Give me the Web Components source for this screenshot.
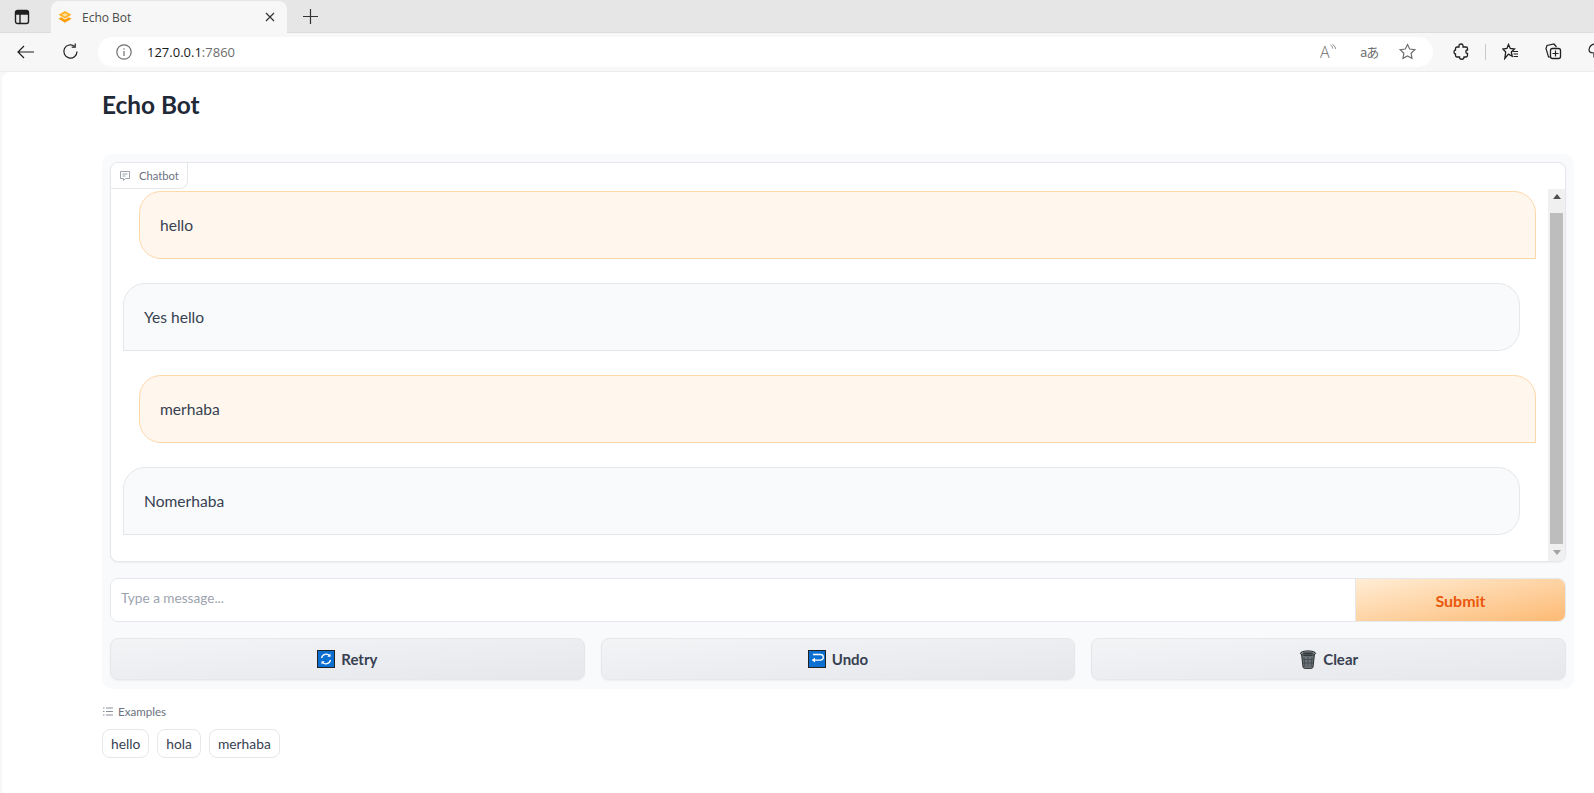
<!DOCTYPE html>
<html>
<head>
<meta charset="utf-8">
<title>Echo Bot</title>
<style>
    html, body { margin: 0; height: 793px; overflow: hidden; background: #f7f7f7; }
    body { font-family: Lato, "Noto Sans", sans-serif; }
</style>
</head>
<body>
<browser-chrome url-host="127.0.0.1" url-port=":7860" tab-title="Echo Bot"></browser-chrome>
<app-page>
    <h-title>Echo Bot</h-title>
    <chat-panel>
        <chat-box>
            <chat-message from="user">hello</chat-message>
            <chat-message from="bot">Yes hello</chat-message>
            <chat-message from="user">merhaba</chat-message>
            <chat-message from="bot">Nomerhaba</chat-message>
        </chat-box>
        <chat-input placeholder="Type a message..."></chat-input>
        <action-row>
            <action-button icon="retry">Retry</action-button>
            <action-button icon="undo">Undo</action-button>
            <action-button icon="clear">Clear</action-button>
        </action-row>
    </chat-panel>
    <example-list items="hello,hola,merhaba"></example-list>
</app-page>

<script>
const FONT = 'Lato, "Noto Sans", sans-serif';

const chromeTemplate = document.createElement('template');
chromeTemplate.innerHTML = `
<style>
    :host { display: block; font-family: "Open Sans", "Noto Sans", sans-serif; color: #1b1b1b; }
    svg { display: block; fill: none; stroke: #1f1f1f; stroke-width: 1.2; }
    .strip { display: flex; align-items: flex-end; height: 32px; background: #e6e6e6; border-bottom: 1px solid #dcdcdc; }
    .side { width: 16px; height: 16px; margin: 0 14px 7px 14px; flex: none; }
    .tab { display: flex; align-items: center; box-sizing: border-box; width: 236px; height: 32px; margin: 0 0 -1px 7px; padding: 0 8px 0 6px; background: #f7f7f7; border-radius: 8px 8px 0 0; font-size: 12px; color: #4a4a4a; }
    .tab .fav { margin: 0 10px 0 1px; stroke: none; }
    .tab span { flex: 1; }
    .plus { margin: 0 0 8px 16px; }
    .bar { display: flex; align-items: center; box-sizing: border-box; height: 39px; padding-bottom: 1px; background: #f7f7f7; border-bottom: 1px solid #ececec; }
    .bar > svg { flex: none; }
    .back { margin-left: 17px; }
    .reload { margin-left: 28px; }
    .pill { flex: none; display: flex; align-items: center; box-sizing: border-box; width: 1335px; height: 30px; margin: 0 0 0 19px; padding-left: 18px; background: #fff; border-radius: 15px; font-size: 13px; }
    .pill .port { color: #6d6d6d; }
    .pill .info { margin-right: 15px; stroke: #6f6f6f; }
    .tools { flex: none; display: flex; align-items: center; width: 113px; margin-left: -113px; color: #6f6f6f; }
    .tools svg { stroke: #6f6f6f; }
    .read { display: flex; align-items: flex-start; width: 18px; font-size: 16px; line-height: 18px; font-weight: 300; }
    .trans { margin-left: 22px; width: 18px; white-space: nowrap; font: 13px "Noto Sans CJK JP", "Noto Sans", sans-serif; letter-spacing: -1px; }
    .sep { flex: none; width: 1px; height: 16px; background: #c9c9c9; margin: 0 16px 0 16px; }
</style>
<div class="strip">
    <svg class="side" width="16" height="16" viewBox="0 0 16 16"><rect x="1.5" y="1.5" width="13" height="13" rx="2" stroke-width="1.4"/><path d="M1.5 5h13M6 5v9.5" stroke-width="1.4"/><rect x="2" y="2" width="12" height="3" fill="#1f1f1f" stroke="none"/></svg>
    <div class="tab">
        <svg class="fav" width="14" height="14" viewBox="0 0 14 14"><path d="M7 1 13.500 4.800 7 8.600.5 4.800z" fill="#ffb224"/><path d="M.5 8.800 3.200 7.200 7 9.400l3.800-2.200 2.700 1.600L7 12.800z" fill="#ff9d0a"/><path d="M4 4.800 7 3.200l3 1.600-3 1.700z" fill="#ffe3a6"/></svg>
        <span id="title"></span>
        <svg width="10" height="10" viewBox="0 0 10 10" style="margin-right:4px"><path d="M1 1l8 8M9 1 1 9" stroke="#333"/></svg>
    </div>
    <svg class="plus" width="15" height="15" viewBox="0 0 15 15"><path d="M7.5 0v15M0 7.5h15" stroke="#333"/></svg>
</div>
<div class="bar">
    <svg class="back" width="17" height="14" viewBox="0 0 17 14"><path d="M17 7H1M7 1 1 7l6 6"/></svg>
    <svg class="reload" width="17" height="17" viewBox="0 0 17 17"><path d="M15 8.5A6.6 6.6 0 1 1 12.6 3.4"/><path d="M13.2 .6v3.5H9.7"/></svg>
    <div class="pill">
        <svg class="info" width="16" height="16" viewBox="0 0 16 16"><circle cx="8" cy="8" r="7.2"/><path d="M8 7v5M8 4.2v1.4"/></svg>
        <span id="host"></span><span class="port" id="port"></span>
    </div>
    <div class="tools">
        <div class="read"><span>A</span><svg width="7" height="8" viewBox="0 0 7 8" style="margin-top:1px"><path d="M.5 1c1.500 1 2 2 2.200 3.500M2.500.3c1.800 1.100 2.800 2.800 3 4.500" stroke-width=".9"/></svg></div>
        <div class="trans">aあ</div>
        <svg style="margin-left:21px" width="17" height="17" viewBox="0 0 17 17"><path d="M8.500 1.500 10.700 6 15.800 6.700 12.100 10.200 13 15.300 8.500 12.900 4 15.300 4.900 10.200 1.200 6.700 6.300 6z"/></svg>
    </div>
    <svg style="margin-left:20px" width="16" height="17" viewBox="0 0 16 17"><path d="M6 2.500c0-2 4-2 4 0V4h3a1.500 1.500 0 0 1 1.500 1.500V7c-2.300 0-2.300 3.500 0 3.500v2A1.500 1.500 0 0 1 13 14h-2c0 3-4.500 3-4.500 0H4a1.500 1.500 0 0 1-1.500-1.500V11C.5 11 .5 7 2.500 7V5.500A1.500 1.500 0 0 1 4 4h2z" stroke-width="1.300"/></svg>
    <div class="sep"></div>
    <svg width="17" height="17" viewBox="0 0 17 17"><path d="M6.500 1.500 8.300 5.500 12.500 6 9.300 9 10.200 13.300 6.500 11.200 2.800 15.500 3.700 9 .8 6 4.900 5.500z" stroke-width="1.300"/><path d="M11 8.500h5M11.500 11h4.500M11.500 13.500h4.500"/></svg>
    <svg style="margin-left:26px" width="17" height="17" viewBox="0 0 17 17"><path d="M6 14H3.500L1 5.500 2 2.500 9 1l2.500 3" stroke-width="1.200"/><rect x="5.500" y="5.500" width="10" height="10" rx="2" stroke-width="1.300"/><path d="M10.500 7.500v6M7.500 10.500h6"/></svg>
    <svg style="margin-left:26px" width="16" height="17" viewBox="0 0 16 17"><path d="M1 7a6 6 0 0 1 12 0c0 3-3 3-5 3l-2 3v-3C3 10 1 9 1 7z"/></svg>
</div>`;

class BrowserChrome extends HTMLElement {
    constructor() {
        super();
        this.root = this.attachShadow({mode: 'open'});
        this.root.appendChild(chromeTemplate.content.cloneNode(true));
    }

    connectedCallback() {
        this.root.getElementById('title').textContent = this.getAttribute('tab-title');
        this.root.getElementById('host').textContent = this.getAttribute('url-host');
        this.root.getElementById('port').textContent = this.getAttribute('url-port');
    }
}

// small helper for elements that are just a styled slot
function slotted(name, css, inner) {
    customElements.define(name, class extends HTMLElement {
        constructor() {
            super();
            this.attachShadow({mode: 'open'}).innerHTML = `<style>${css}</style>${inner || '<slot></slot>'}`;
        }
    });
}

slotted('app-page', `
    :host { display: block; box-sizing: border-box; height: 721px; margin-left: 2px; padding: 0 20px 0 100px; background: #fff; border-radius: 8px 0 0 0; font-family: ${FONT}; }
`);

slotted('h-title', `
    :host { display: block; padding: 15px 0 31px 0; font-size: 24.4px; line-height: 36px; font-weight: 700; color: #1f2937; }
`);

slotted('chat-panel', `
    :host { display: flex; flex-direction: column; gap: 16px; box-sizing: border-box; height: 535px; padding: 8px 8px 0 8px; background: #f9fafb; border-radius: 10px; }
`);

slotted('action-row', `
    :host { display: grid; grid-template-columns: repeat(3, 1fr); gap: 16px; }
`);

const boxTemplate = document.createElement('template');
boxTemplate.innerHTML = `
<style>
    :host { display: block; position: relative; box-sizing: border-box; height: 400px; background: #fff; border: 1px solid #e5e7eb; border-radius: 8px; box-shadow: 0 1px 2px rgba(0,0,0,.05); overflow: hidden; }
    .label { position: absolute; left: 0; top: 0; display: flex; align-items: center; gap: 8px; box-sizing: border-box; height: 26px; padding: 0 8px; background: #fff; border: 1px solid #e5e7eb; border-width: 0 1px 1px 0; border-radius: 0 0 8px 0; font-size: 11.2px; color: #6b7280; z-index: 1; }
    .wrap { display: flex; height: 100%; }
    .list { flex: 1; display: flex; flex-direction: column; gap: 24px; padding-top: 28px; min-width: 0; }
    .scroll { flex: none; display: flex; flex-direction: column; align-items: center; box-sizing: border-box; width: 17px; height: 373px; margin-top: 26px; background: #f0f0f0; }
    .arrow { flex: none; height: 24px; padding-top: 5px; box-sizing: border-box; }
    .arrow.down { height: 18px; padding-top: 6px; }
    .thumb { flex: 1; width: 13px; background: #bdbdbd; }
</style>
<div class="label">
    <svg width="12" height="12" viewBox="0 0 12 12" fill="none" stroke="#9ca3af"><path d="M1.500 1.500h9v7H6.500l-2 2v-2h-3z"/><path d="M3.500 4h5M3.500 6h3"/></svg>
    <span>Chatbot</span>
</div>
<div class="wrap">
    <div class="list"><slot></slot></div>
    <div class="scroll">
        <div class="arrow"><svg width="8" height="5" viewBox="0 0 8 5" style="display:block"><path d="M4 0 8 5H0z" fill="#505050"/></svg></div>
        <div class="thumb"></div>
        <div class="arrow down"><svg width="8" height="5" viewBox="0 0 8 5" style="display:block"><path d="M0 0h8L4 5z" fill="#a3a3a3"/></svg></div>
    </div>
</div>`;

class ChatBox extends HTMLElement {
    constructor() {
        super();
        this.root = this.attachShadow({mode: 'open'});
        this.root.appendChild(boxTemplate.content.cloneNode(true));
    }
}

slotted('chat-message', `
    :host { display: block; box-sizing: border-box; height: 68px; padding: 21px 20px; border: 1px solid; font-size: 15.6px; line-height: 24px; color: #374151; }
    :host([from="user"]) { margin: 0 12px 0 28px; background: #fff7ed; border-color: #fed7aa; border-radius: 22px 22px 0 22px; }
    :host([from="bot"]) { margin: 0 28px 0 12px; background: #f9fafb; border-color: #e5e7eb; border-radius: 22px 22px 22px 0; }
`);

const inputTemplate = document.createElement('template');
inputTemplate.innerHTML = `
<style>
    :host { display: flex; box-sizing: border-box; height: 44px; background: #fff; border: 1px solid #e5e7eb; border-radius: 8px; overflow: hidden; }
    input { flex: 1; min-width: 0; border: none; outline: none; padding: 0 10px 4px; background: #fff; font: 13.6px ${FONT}; color: #374151; }
    input::placeholder { color: #9ca3af; opacity: 1; }
    button { flex: none; width: 210px; border: none; border-left: 1px solid #e5e7eb; background: linear-gradient(to bottom right, #ffedd5, #fdba74); color: #ea580c; font: 700 16px ${FONT}; }
</style>
<input>
<button>Submit</button>`;

class ChatInput extends HTMLElement {
    constructor() {
        super();
        this.root = this.attachShadow({mode: 'open'});
        this.root.appendChild(inputTemplate.content.cloneNode(true));
    }

    connectedCallback() {
        this.root.querySelector('input').placeholder = this.getAttribute('placeholder');
    }
}

const ICONS = {
    retry: `<svg width="18" height="18" viewBox="0 0 18 18"><rect x=".5" y=".5" width="17" height="17" fill="#0a6fd0" stroke="#222"/><path d="M4.500 8A4.700 4.700 0 0 1 12.800 6M13.500 10A4.700 4.700 0 0 1 5.200 12" fill="none" stroke="#fff" stroke-width="1.300"/><path d="M13.500 3.500v3.200h-3.200zM4.500 14.500v-3.200h3.200z" fill="#fff"/></svg>`,
    undo: `<svg width="18" height="18" viewBox="0 0 18 18"><rect x=".5" y=".5" width="17" height="17" fill="#0a6fd0" stroke="#222"/><path d="M5 4.500h7.500a2.800 2.800 0 0 1 0 5.600H4.500" fill="none" stroke="#fff" stroke-width="1.300"/><path d="M7 7.800 3.800 10.100 7 12.500z" fill="#fff"/></svg>`,
    clear: `<svg width="18" height="19" viewBox="0 0 18 19"><path d="M2.500 4 4 17c.2 1.300 1.500 1.700 5 1.700s4.800-.4 5-1.700l1.500-13z" fill="#6b7478" stroke="#2a2d2f"/><path d="M5 7l1 10M9 7v10M13 7l-1 10M3.500 9.500h11M3.800 13h10.400" stroke="#3c4245" stroke-width=".7"/><ellipse cx="9" cy="3.300" rx="7.600" ry="2.400" fill="#8b9498" stroke="#2a2d2f"/><ellipse cx="9" cy="3.500" rx="5.500" ry="1.300" fill="#33383b"/></svg>`
};

customElements.define('action-button', class extends HTMLElement {
    constructor() {
        super();
        this.root = this.attachShadow({mode: 'open'});
    }

    connectedCallback() {
        this.root.innerHTML = `
        <style>
            :host { display: flex; align-items: center; justify-content: center; gap: 6px; box-sizing: border-box; height: 42px; background: linear-gradient(to bottom right, #f3f4f6, #e5e7eb); border: 1px solid #e5e7eb; border-radius: 8px; box-shadow: 0 1px 2px rgba(0,0,0,.05); color: #374151; font-size: 15px; font-weight: 700; }
            svg { display: block; flex: none; }
        </style>
        ${ICONS[this.getAttribute('icon')]}<slot></slot>`;
    }
});

const examplesTemplate = document.createElement('template');
examplesTemplate.innerHTML = `
<style>
    :host { display: block; padding-top: 13px; }
    .head { display: flex; align-items: center; gap: 5px; height: 18px; padding-left: 1px; font-size: 11.6px; color: #6b7280; }
    .items { display: flex; gap: 8px; margin-top: 9px; }
    .item { box-sizing: border-box; height: 29px; padding: 0 8px; line-height: 27px; background: #fff; border: 1px solid #e5e7eb; border-radius: 8px; font-size: 13.8px; color: #374151; }
</style>
<div class="head">
    <svg width="10" height="9" viewBox="0 0 10 9" fill="none" stroke="#6b7280" stroke-width=".8"><path d="M3 1h7M3 4.500h7M3 8h7M0 1h1.500M0 4.500h1.500M0 8h1.500"/></svg>
    <span>Examples</span>
</div>
<div class="items"></div>`;

class ExampleList extends HTMLElement {
    constructor() {
        super();
        this.root = this.attachShadow({mode: 'open'});
        this.root.appendChild(examplesTemplate.content.cloneNode(true));
    }

    connectedCallback() {
        const items = this.root.querySelector('.items');
        this.getAttribute('items').split(',').forEach(text => {
            let item = document.createElement('div');
            item.className = 'item';
            item.textContent = text;
            items.appendChild(item);
        });
    }
}

customElements.define('browser-chrome', BrowserChrome);
customElements.define('chat-box', ChatBox);
customElements.define('chat-input', ChatInput);
customElements.define('example-list', ExampleList);
</script>
</body>
</html>
